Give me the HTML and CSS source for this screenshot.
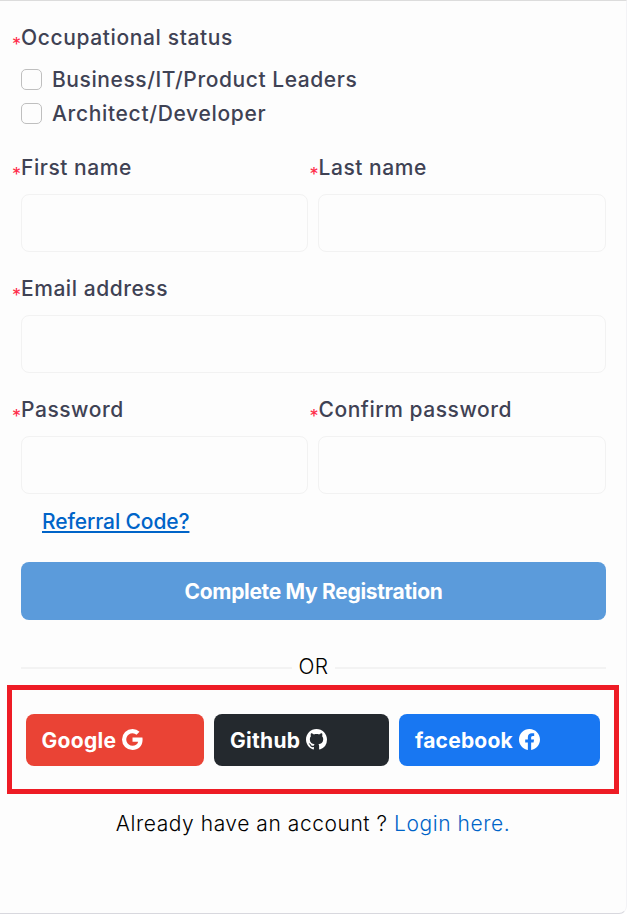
FILE: index.html
```html
<!DOCTYPE html>
<html lang="en">
<head>
<meta charset="utf-8">
<title>Registration</title>
<link rel="stylesheet" href="styles.css">
</head>
<body>
<main class="card">
  <form class="form">
    <div class="label status"><span class="req">*</span>Occupational status</div>
    <label class="check first"><input type="checkbox"><span class="business">Business/IT/Product Leaders</span></label>
    <label class="check"><input type="checkbox"><span>Architect/Developer</span></label>

    <div class="row">
      <div class="field"><label class="label" for="first"><span class="req">*</span>First name</label><input class="input" id="first" type="text"></div>
      <div class="field"><label class="label" for="last"><span class="req">*</span>Last name</label><input class="input" id="last" type="text"></div>
    </div>
    <div class="row">
      <div class="field"><label class="label" for="email"><span class="req">*</span>Email address</label><input class="input" id="email" type="email"></div>
    </div>
    <div class="row">
      <div class="field"><label class="label" for="pw"><span class="req">*</span>Password</label><input class="input" id="pw" type="password"></div>
      <div class="field"><label class="label" for="pw2"><span class="req">*</span>Confirm password</label><input class="input" id="pw2" type="password"></div>
    </div>

    <div class="referral"><a href="#">Referral Code?</a></div>
    <button class="submit" type="button">Complete My Registration</button>
    <div class="divider"><span>OR</span></div>
  </form>

  <section class="social">
    <a class="btn google" href="#"><span>Google</span>
      <svg viewBox="0 0 16 16"><path d="M15.545 6.558a9.4 9.4 0 0 1 .139 1.626c0 2.434-.87 4.492-2.384 5.885h.002C11.978 15.292 10.158 16 8 16A8 8 0 1 1 8 0a7.7 7.7 0 0 1 5.352 2.082l-2.284 2.284A4.35 4.35 0 0 0 8 3.166c-2.087 0-3.86 1.408-4.492 3.304a4.8 4.8 0 0 0 0 3.063h.003c.635 1.893 2.405 3.301 4.492 3.301 1.078 0 2.004-.276 2.722-.764h-.003a3.7 3.7 0 0 0 1.599-2.431H8v-3.08z"/></svg></a>
    <a class="btn github" href="#"><span>Github</span>
      <svg viewBox="0 0 16 16"><path d="M8 0C3.58 0 0 3.58 0 8c0 3.54 2.29 6.53 5.47 7.59.4.07.55-.17.55-.38 0-.19-.01-.82-.01-1.49-2.01.37-2.53-.49-2.69-.94-.09-.23-.48-.94-.82-1.13-.28-.15-.68-.52-.01-.53.63-.01 1.08.58 1.23.82.72 1.21 1.87.87 2.33.66.07-.52.28-.87.51-1.07-1.78-.2-3.64-.89-3.64-3.95 0-.87.31-1.59.82-2.15-.08-.2-.36-1.02.08-2.12 0 0 .67-.21 2.2.82.64-.18 1.32-.27 2-.27s1.36.09 2 .27c1.53-1.04 2.2-.82 2.2-.82.44 1.1.16 1.92.08 2.12.51.56.82 1.27.82 2.15 0 3.07-1.87 3.75-3.65 3.95.29.25.54.73.54 1.48 0 1.07-.01 1.93-.01 2.2 0 .21.15.46.55.38A8.01 8.01 0 0 0 16 8c0-4.42-3.58-8-8-8"/></svg></a>
    <a class="btn facebook" href="#"><span>facebook</span>
      <svg viewBox="0 0 16 16"><path d="M16 8.049c0-4.446-3.582-8.05-8-8.05C3.58 0-.002 3.603-.002 8.05c0 4.017 2.926 7.347 6.75 7.951v-5.625h-2.03V8.05H6.75V6.275c0-2.017 1.195-3.131 3.022-3.131.876 0 1.791.157 1.791.157v1.98h-1.009c-.993 0-1.303.621-1.303 1.258v1.51h2.218l-.354 2.326H9.25V16c3.824-.604 6.75-3.934 6.75-7.951"/></svg></a>
  </section>

  <p class="login">Already have an account ? <a href="#">Login here.</a></p>
</main>
</body>
</html>
```

FILE: styles.css
```css
* { box-sizing: border-box; }

body {
  margin: 0;
  background: #fff;
  font-family: Inter, sans-serif;
  font-size: 21px;
  line-height: 30px;
  color: #000;
}

.card {
  width: 627px;
  height: 914px;
  background: #fdfdfd;
  border: 1px solid #dcdcdc;
  border-left: 0;
  border-right-color: #f3f3f6;
  border-bottom-color: #d8d8de;
  border-radius: 0 0 8px 0;
}

.form { padding: 22px 20px 0 21px; }

.label {
  display: block;
  position: relative;
  height: 30px;
  font-weight: 500;
  letter-spacing: 0.54px;
  color: #3f4254;
  white-space: nowrap;
}
.label.status { letter-spacing: 0.62px; }

/* The marker hangs in the gutter left of the label. */
.req {
  position: absolute;
  left: -9px;
  top: 7px;
  font-size: 18px;
  font-weight: 400;
  color: #ff2a48;
}

.check {
  display: flex;
  align-items: center;
  gap: 10px;
  height: 34px;
  font-weight: 500;
  letter-spacing: 0.67px;
  color: #3f4254;
}
.check.first { margin-top: 10px; }
.business { letter-spacing: 0.57px; }
.check input {
  appearance: none;
  width: 21px;
  height: 21px;
  margin: 0 0 1px;
  border: 1px solid #bfbfbf;
  border-radius: 5px;
}

.row { display: flex; gap: 10px; }
.field { flex: 1; margin-top: 22px; }
.field:first-child:not(:last-child) { flex: 0 0 287px; }
.field + .field .label { padding-left: 0.5px; }
.field + .field .req { left: -8.5px; }
.input {
  display: block;
  width: 100%;
  height: 58px;
  margin-top: 11px;
  padding: 0 16px;
  border: 1px solid #f2f2f2;
  border-radius: 8px;
  background: #fdfdfd;
}

.referral {
  margin: 13px 0 0 21px;
  font-weight: 500;
  letter-spacing: -0.12px;
}
.referral a {
  color: #0064c8;
  text-decoration-thickness: 2px;
  text-underline-offset: 2px;
  text-decoration-skip-ink: none;
}

.submit {
  display: block;
  width: 100%;
  height: 58px;
  margin-top: 25px;
  padding: 2px 0 0;
  border: 0;
  border-radius: 8px;
  background: #5b9bdb;
  color: #fff;
  font: 700 21px/30px Inter, sans-serif;
  letter-spacing: -0.32px;
}

.divider {
  display: flex;
  align-items: center;
  gap: 6px;
  height: 30px;
  margin-top: 32px;
  font-weight: 300;
}
.divider span { letter-spacing: 0.4px; }
.divider::before,
.divider::after {
  content: "";
  flex: 1;
  height: 2px;
  margin-top: 2px;
  background: #f3f3f3;
}

.social {
  display: flex;
  gap: 10px;
  width: 612px;
  height: 109px;
  margin: 3px 0 0 7px;
  padding: 24px 14px;
  border: 5px solid #ee1c25;
}
.btn {
  display: flex;
  align-items: center;
  gap: 6px;
  height: 52px;
  padding: 2px 16px 0;
  border-radius: 8px;
  color: #fff;
  font-weight: 700;
  letter-spacing: 0.3px;
  text-decoration: none;
}
.btn svg {
  width: 21px;
  height: 21px;
  margin-top: -4px;
  fill: #fff;
}
.google { width: 178px; padding-left: 15.5px; background: #ea4335; }
.github { width: 175px; background: #24292e; }
.facebook { width: 201px; letter-spacing: 0.22px; background: #1877f2; }

.login {
  margin: 15px 0 0;
  text-align: center;
  font-weight: 300;
  letter-spacing: 0.55px;
}
.login a { color: #0064c8; text-decoration: none; }
```
